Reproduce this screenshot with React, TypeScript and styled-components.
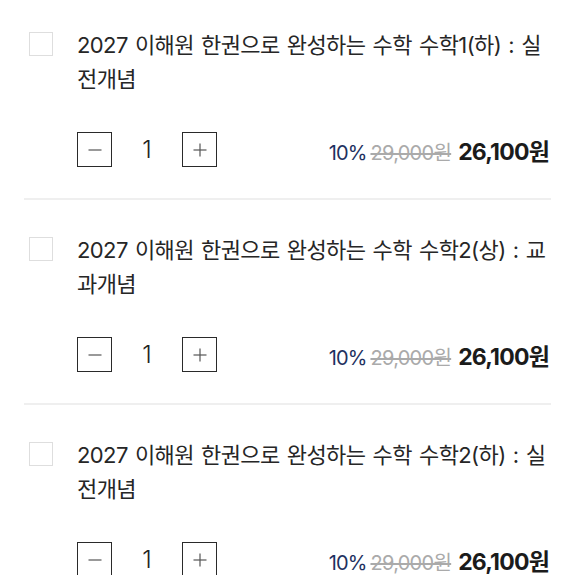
import React from "react";
import styled, { createGlobalStyle } from "styled-components";

const Global = createGlobalStyle`
  html, body { margin: 0; padding: 0; background: #fff; }
  body { font-family: Inter, "Noto Sans CJK KR", sans-serif; color: #222; }
`;

const List = styled.ul`
  list-style: none;
  margin: 0;
  padding: 0 24px;
`;

const Item = styled.li`
  display: grid;
  grid-template-columns: 24px 1fr;
  column-gap: 24px;
  padding: 33px 2px 31px 5px;
  border-bottom: 2px solid #efefef;
  &:first-child { padding-top: 28px; }
`;

const Check = styled.span`
  width: 24px;
  height: 24px;
  box-sizing: border-box;
  border: 1px solid #dedede;
  margin-top: 4px;
  background: #fff;
`;

const Body = styled.div`
  display: flex;
  flex-direction: column;
  gap: 36px;
  min-width: 0;
`;

const Title = styled.div`
  font-family: Inter, "Noto Sans CJK KR", sans-serif;
  font-size: 22px;
  line-height: 34px;
  letter-spacing: -0.6px;
  word-spacing: 1.6px;
  color: #262626;
`;

const Row = styled.div`
  display: flex;
  align-items: center;
  justify-content: space-between;
`;

const Qty = styled.div`
  display: flex;
  align-items: center;
`;

const QtyButton = styled.button`
  width: 35px;
  height: 35px;
  box-sizing: border-box;
  border: 1.5px solid #2a2a2a;
  background: #fff;
  padding: 0;
  display: flex;
  align-items: center;
  justify-content: center;
  color: #555;
`;

const Count = styled.span`
  width: 70px;
  text-align: center;
  font-family: Inter, sans-serif;
  font-size: 24px;
  font-weight: 300;
  line-height: 35px;
  color: #222;
`;

const Price = styled.div`
  display: flex;
  align-items: baseline;
  font-family: Inter, "Noto Sans CJK KR", sans-serif;
`;

const Rate = styled.span`
  font-size: 20px;
  letter-spacing: -0.9px;
  color: #1e3160;
  margin-right: 4px;
`;

const Origin = styled.span`
  font-size: 20px;
  letter-spacing: -0.7px;
  color: #aaa;
  text-decoration: line-through;
  margin-right: 7px;
`;

const Sale = styled.span`
  font-size: 23px;
  font-weight: 700;
  letter-spacing: -0.8px;
  color: #1b1b1b;
`;

const Minus = () => (
  <svg width="14" height="14" viewBox="0 0 14 14">
    <line x1="0.5" y1="7" x2="13.5" y2="7" stroke="currentColor" strokeWidth="1.2" />
  </svg>
);

const Plus = () => (
  <svg width="14" height="14" viewBox="0 0 14 14">
    <line x1="0.5" y1="7" x2="13.5" y2="7" stroke="currentColor" strokeWidth="1.2" />
    <line x1="7" y1="0.5" x2="7" y2="13.5" stroke="currentColor" strokeWidth="1.2" />
  </svg>
);

const items = [
  "2027 이해원 한권으로 완성하는 수학 수학1(하) : 실전개념",
  "2027 이해원 한권으로 완성하는 수학 수학2(상) : 교과개념",
  "2027 이해원 한권으로 완성하는 수학 수학2(하) : 실전개념",
];

export default function App() {
  return (
    <>
      <Global />
      <List>
        {items.map((t) => (
          <Item key={t}>
            <Check />
            <Body>
              <Title>{t}</Title>
              <Row>
                <Qty>
                  <QtyButton aria-label="minus"><Minus /></QtyButton>
                  <Count>1</Count>
                  <QtyButton aria-label="plus"><Plus /></QtyButton>
                </Qty>
                <Price>
                  <Rate>10%</Rate>
                  <Origin>29,000원</Origin>
                  <Sale>26,100원</Sale>
                </Price>
              </Row>
            </Body>
          </Item>
        ))}
      </List>
    </>
  );
}
